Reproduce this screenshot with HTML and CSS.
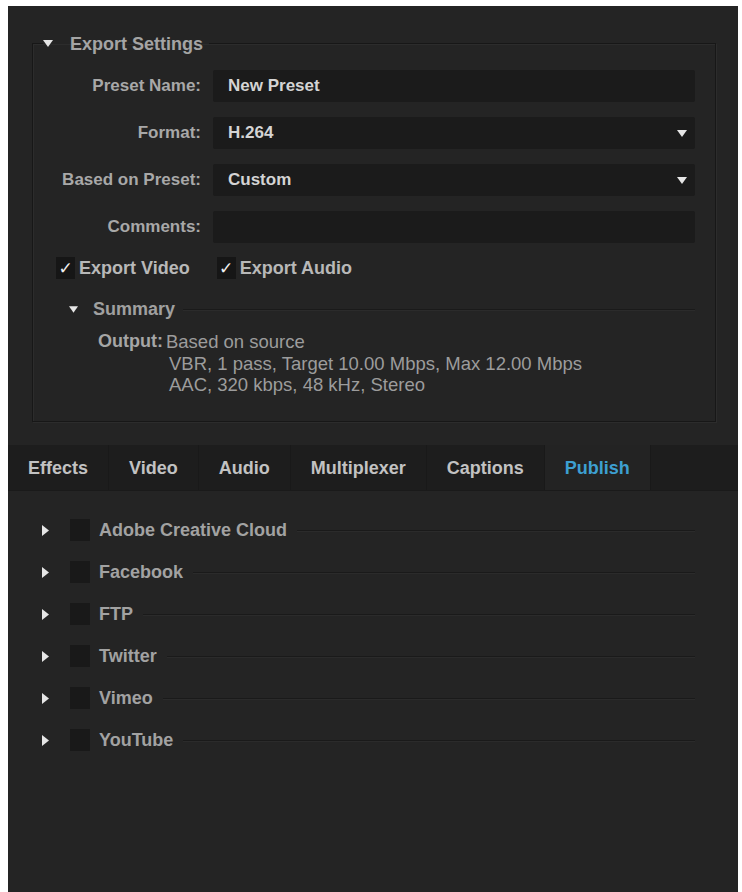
FILE: index.html
```html
<!DOCTYPE html>
<html>
<head>
<meta charset="utf-8">
<link rel="stylesheet" href="styles.css">
</head>
<body>
<div class="panel">
  <fieldset class="settings">
    <legend class="legend">
      <svg class="tri-down" width="10" height="7" viewBox="0 0 10 7"><polygon points="0,0 10,0 5,7" fill="#e6e6e6"/></svg>
      <span>Export Settings</span>
    </legend>
    <div class="form">
      <label class="lbl">Preset Name:</label>
      <div class="field">New Preset</div>
      <label class="lbl">Format:</label>
      <div class="field select"><span>H.264</span><svg width="10" height="7" viewBox="0 0 10 7"><polygon points="0,0 10,0 5,7" fill="#e6e6e6"/></svg></div>
      <label class="lbl">Based on Preset:</label>
      <div class="field select"><span>Custom</span><svg width="10" height="7" viewBox="0 0 10 7"><polygon points="0,0 10,0 5,7" fill="#e6e6e6"/></svg></div>
      <label class="lbl">Comments:</label>
      <div class="field"></div>
    </div>
    <div class="checks">
      <div class="check"><span class="box">&#10003;</span><span>Export Video</span></div>
      <div class="check"><span class="box">&#10003;</span><span>Export Audio</span></div>
    </div>
    <div class="summary-head">
      <svg class="tri-down" width="9" height="7" viewBox="0 0 10 7"><polygon points="0,0 10,0 5,7" fill="#e6e6e6"/></svg>
      <span>Summary</span>
      <div class="rule"></div>
    </div>
    <div class="output">
      <span class="out-lbl">Output:</span>
      <div class="out-lines">
        <div>Based on source</div>
        <div>VBR, 1 pass, Target 10.00 Mbps, Max 12.00 Mbps</div>
        <div>AAC, 320 kbps, 48 kHz, Stereo</div>
      </div>
    </div>
  </fieldset>

  <div class="tabs">
    <div class="tab">Effects</div>
    <div class="tab">Video</div>
    <div class="tab">Audio</div>
    <div class="tab">Multiplexer</div>
    <div class="tab">Captions</div>
    <div class="tab active">Publish</div>
  </div>

  <div class="publish-list">
    <div class="pub-row"><svg class="tri-right" width="7" height="11" viewBox="0 0 7 11"><polygon points="0,0 7,5.5 0,11" fill="#e6e6e6"/></svg><span class="pbox"></span><span class="pname">Adobe Creative Cloud</span><div class="rule"></div></div>
    <div class="pub-row"><svg class="tri-right" width="7" height="11" viewBox="0 0 7 11"><polygon points="0,0 7,5.5 0,11" fill="#e6e6e6"/></svg><span class="pbox"></span><span class="pname">Facebook</span><div class="rule"></div></div>
    <div class="pub-row"><svg class="tri-right" width="7" height="11" viewBox="0 0 7 11"><polygon points="0,0 7,5.5 0,11" fill="#e6e6e6"/></svg><span class="pbox"></span><span class="pname">FTP</span><div class="rule"></div></div>
    <div class="pub-row"><svg class="tri-right" width="7" height="11" viewBox="0 0 7 11"><polygon points="0,0 7,5.5 0,11" fill="#e6e6e6"/></svg><span class="pbox"></span><span class="pname">Twitter</span><div class="rule"></div></div>
    <div class="pub-row"><svg class="tri-right" width="7" height="11" viewBox="0 0 7 11"><polygon points="0,0 7,5.5 0,11" fill="#e6e6e6"/></svg><span class="pbox"></span><span class="pname">Vimeo</span><div class="rule"></div></div>
    <div class="pub-row"><svg class="tri-right" width="7" height="11" viewBox="0 0 7 11"><polygon points="0,0 7,5.5 0,11" fill="#e6e6e6"/></svg><span class="pbox"></span><span class="pname">YouTube</span><div class="rule"></div></div>
  </div>
</div>
</body>
</html>
```

FILE: styles.css
```css
html, body {
  margin: 0;
  padding: 0;
  background: #ffffff;
}
body {
  padding: 6px 4px 0 8px;
  font-family: "Liberation Sans", Arial, sans-serif;
  font-size: 18px;
  color: #b0b0b0;
}
.panel {
  width: 730px;
  height: 886px;
  background: #242424;
  overflow: hidden;
  display: flex;
  flex-direction: column;
}

/* ---------- Export settings group ---------- */
.settings {
  box-sizing: border-box;
  margin: 26px 22px 0 24px;
  height: 390px;
  padding: 0 20px 0 10px;
  border: 1px solid #171717;
  box-shadow: 1px 1px 0 #2c2c2c, inset 1px 1px 0 #2c2c2c;
  min-width: 0;
}
.legend {
  display: flex;
  align-items: center;
  height: 20px;
  padding: 2px 6px 0 0;
  font-weight: bold;
  color: #a4a4a4;
}
.legend .tri-down {
  margin-right: 17px;
  margin-top: -2px;
}

.form {
  margin-top: 16px;
  display: grid;
  grid-template-columns: 158px 1fr;
  column-gap: 12px;
  row-gap: 15px;
  align-items: center;
  font-size: 17px;
}
.lbl {
  text-align: right;
  font-weight: bold;
  color: #a8a8a8;
}
.field {
  height: 32px;
  box-sizing: border-box;
  background: #1b1b1b;
  border-radius: 2px;
  padding: 0 8px 0 15px;
  display: flex;
  align-items: center;
  justify-content: space-between;
  font-weight: bold;
  color: #d4d4d4;
}

.checks {
  margin-top: 13px;
  display: flex;
  gap: 27px;
  padding-left: 13px;
  height: 24px;
  align-items: center;
}
.check {
  display: flex;
  align-items: center;
  gap: 4px;
  font-weight: bold;
  color: #b8b8b8;
}
.check .box {
  width: 19px;
  height: 22px;
  background: #161616;
  color: #f0f0f0;
  font-family: "DejaVu Sans", sans-serif;
  font-size: 17px;
  display: flex;
  align-items: center;
  justify-content: center;
}

.summary-head {
  margin-top: 18px;
  margin-left: 26px;
  display: flex;
  align-items: center;
  height: 22px;
  font-weight: bold;
  color: #a0a0a0;
}
.summary-head .tri-down {
  margin-right: 15px;
}
.summary-head .rule {
  flex: 1;
  height: 1px;
  margin-left: 8px;
  background: #1a1a1a;
  box-shadow: 0 1px 0 #2b2b2b;
}

.output {
  margin-top: 11px;
  margin-left: 55px;
  display: flex;
  gap: 3px;
  line-height: 21.5px;
  color: #9c9c9c;
  font-size: 18.5px;
}
.out-lbl {
  font-weight: bold;
  font-size: 18px;
  color: #a6a6a6;
}
.out-lines div:not(:first-child) {
  padding-left: 3px;
}

/* ---------- Tabs ---------- */
.tabs {
  margin-top: 23px;
  height: 45px;
  display: flex;
  background: #1d1d1d;
  border-bottom: 1px solid #1a1a1a;
}
.tab {
  padding: 2px 20px 0;
  display: flex;
  align-items: center;
  font-weight: bold;
  color: #c2c2c2;
  border-right: 1px solid #191919;
  box-sizing: border-box;
}
.tab.active {
  background: #232323;
  color: #3d9fd1;
  border-left: 1px solid #191919;
  margin-left: -1px;
}

/* ---------- Publish list ---------- */
.publish-list {
  padding-top: 18px;
  display: flex;
  flex-direction: column;
}
.pub-row {
  height: 42px;
  display: flex;
  align-items: center;
  padding: 0 43px 0 34px;
  font-weight: bold;
  color: #a2a2a2;
}
.pub-row .tri-right {
  margin-right: 21px;
}
.pbox {
  width: 20px;
  height: 22px;
  background: #191919;
  margin-right: 9px;
}
.pub-row .rule {
  flex: 1;
  height: 1px;
  margin-left: 10px;
  background: #1a1a1a;
  box-shadow: 0 1px 0 #2b2b2b;
}
```
